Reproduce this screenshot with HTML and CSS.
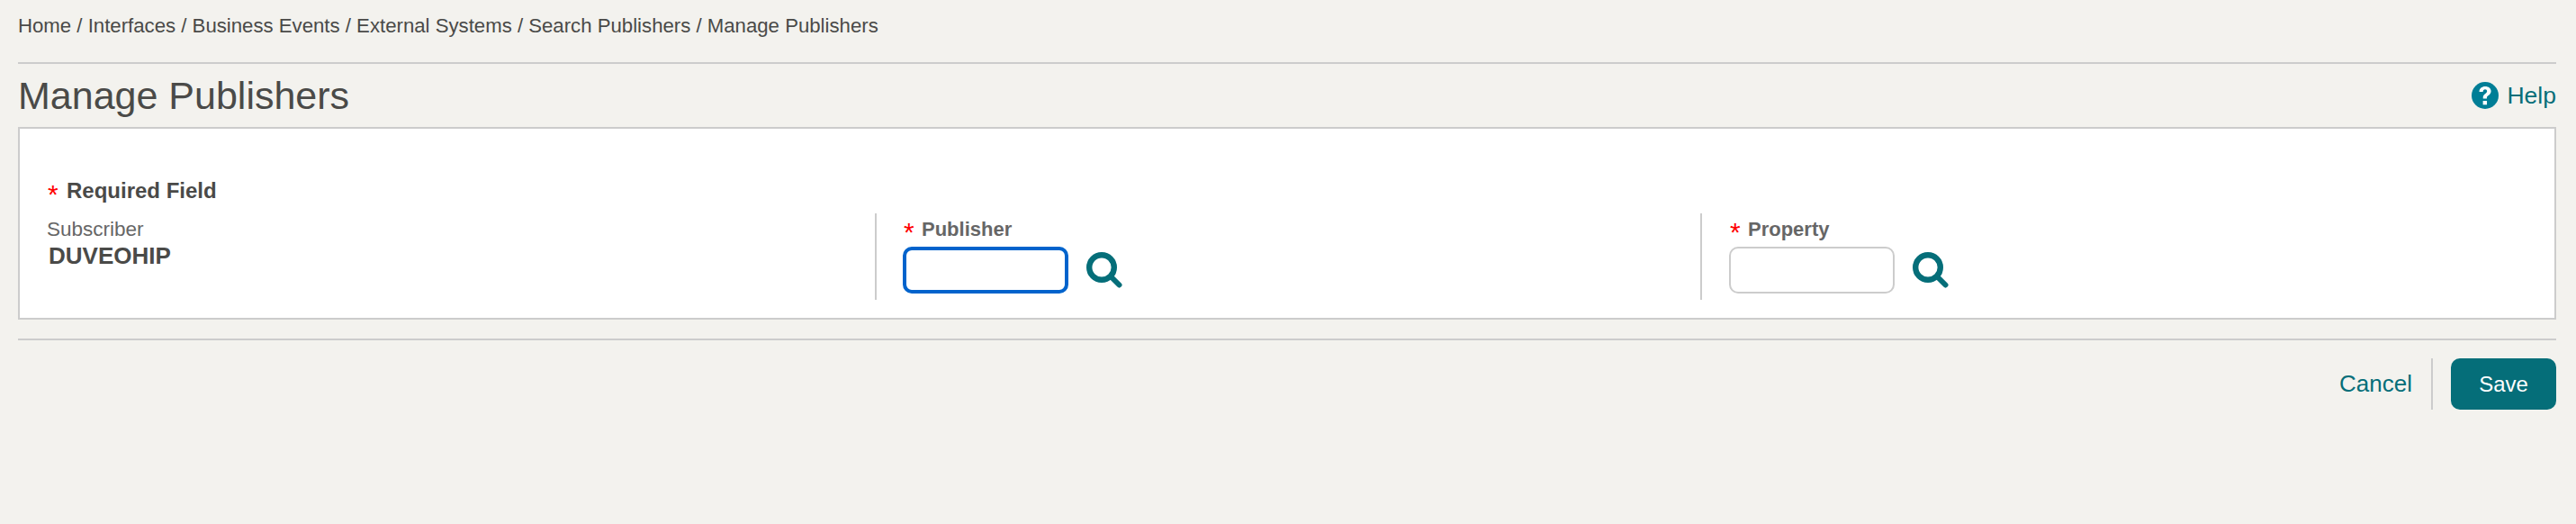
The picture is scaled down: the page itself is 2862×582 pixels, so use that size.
FILE: index.html
```html
<!DOCTYPE html>
<html lang="en">
  <head>
    <meta charset="UTF-8" />
    <title>Manage Publishers</title>
    <link rel="stylesheet" href="styles.css">
  </head>
  <body>
    <nav class="breadcrumb">Home / Interfaces / Business Events / External Systems / Search Publishers / Manage Publishers</nav>

    <header class="page-header">
      <h1>Manage Publishers</h1>
      <a class="help" href="#">
        <svg width="30" height="30" viewBox="0 0 30 30">
          <circle cx="15" cy="15" r="15" fill="#007e96" />
          <g transform="translate(15 15) scale(1.2) translate(-15 -15)">
            <path d="M9.6 11.6c0-3.2 2.4-5 5.500-5 3.200 0 5.400 1.800 5.400 4.500 0 2-1.100 3-2.500 4-1.100.8-1.400 1.200-1.400 2.400v.5h-3.500v-.9c0-1.900.7-2.800 2.100-3.800 1-.7 1.600-1.200 1.600-2.300 0-1-.7-1.700-1.800-1.700-1.200 0-1.900.8-2 2.300z" fill="#fff" />
            <rect x="13" y="20" width="3.700" height="3.600" fill="#fff" />
          </g>
        </svg>
        <span>Help</span>
      </a>
    </header>

    <main class="card">
      <div class="required"><span class="star">*</span>Required Field</div>
      <div class="fields">
        <div class="field first">
          <div class="plain-label">Subscriber</div>
          <div class="value">DUVEOHIP</div>
        </div>
        <div class="field">
          <label class="field-label"><span class="star">*</span>Publisher</label>
          <div class="input-row">
            <input type="text" class="text-input focused" />
            <svg class="search" width="40" height="40" viewBox="0 0 40 40">
              <circle cx="17" cy="17" r="13.800" fill="none" stroke="#056e79" stroke-width="6.400" />
              <line x1="27" y1="27" x2="36.500" y2="36.500" stroke="#056e79" stroke-width="6" stroke-linecap="round" />
            </svg>
          </div>
        </div>
        <div class="field last">
          <label class="field-label"><span class="star">*</span>Property</label>
          <div class="input-row">
            <input type="text" class="text-input" />
            <svg class="search" width="40" height="40" viewBox="0 0 40 40">
              <circle cx="17" cy="17" r="13.800" fill="none" stroke="#056e79" stroke-width="6.400" />
              <line x1="27" y1="27" x2="36.500" y2="36.500" stroke="#056e79" stroke-width="6" stroke-linecap="round" />
            </svg>
          </div>
        </div>
      </div>
    </main>

    <footer class="actions">
      <a class="cancel" href="#">Cancel</a>
      <span class="sep"></span>
      <button class="save">Save</button>
    </footer>
  </body>
</html>
```

FILE: styles.css
```css
body {
  font-family: "Liberation Sans", Arial, sans-serif;
  margin: 0;
  padding: 0 22px 0 20px;
  background-color: #f3f2ee;
  color: #4a4a48;
}
.breadcrumb {
  font-size: 22.2px;
  line-height: 26px;
  padding: 16px 0 27px 0;
  border-bottom: 2px solid #cccccc;
}
.page-header {
  display: flex;
  justify-content: space-between;
  align-items: center;
  height: 70px;
}
.page-header h1 {
  margin: 0;
  font-size: 43px;
  font-weight: normal;
}
.help {
  display: flex;
  align-items: center;
  gap: 9px;
  color: #056e79;
  font-size: 26.500px;
  text-decoration: none;
}
.card {
  box-sizing: border-box;
  background-color: white;
  border: 2px solid #cccccc;
  height: 214px;
  padding: 55px 0 0 30px;
}
.required {
  font-size: 24px;
  font-weight: bold;
  line-height: 28px;
  padding-left: 1px;
}
.star {
  display: inline-block;
  width: 20px;
  color: #ff0000;
  font-size: 30px;
  font-weight: normal;
  line-height: 0;
  vertical-align: -6px;
}
.required .star {
  width: 21px;
}
.fields {
  display: grid;
  grid-template-columns: 920px 917px 1fr;
  margin-top: 11px;
}
.field {
  box-sizing: border-box;
  border-left: 2px solid #cccccc;
  height: 96px;
  padding: 5px 0 0 29px;
}
.field.first {
  border-left: none;
  padding-left: 0;
}
.field.last {
  padding-left: 30px;
}
.plain-label {
  font-size: 22.500px;
  line-height: 26px;
  color: #666666;
}
.value {
  font-size: 26px;
  font-weight: bold;
  line-height: 32px;
  padding-left: 2px;
}
.field-label {
  display: block;
  font-size: 22px;
  font-weight: bold;
  line-height: 26px;
  color: #666666;
  padding-left: 1px;
}
.input-row {
  display: flex;
  align-items: center;
  gap: 20px;
  margin-top: 6px;
}
.text-input {
  box-sizing: border-box;
  width: 184px;
  height: 52px;
  border: 2px solid #cccccc;
  border-radius: 10px;
  background-color: white;
  outline: none;
}
.text-input.focused {
  border: 4px solid #0063cc;
}
.actions {
  display: flex;
  justify-content: flex-end;
  align-items: center;
  border-top: 2px solid #cccccc;
  margin-top: 21px;
  padding-top: 20px;
}
.cancel {
  color: #056e79;
  font-size: 26px;
  text-decoration: none;
}
.sep {
  width: 2px;
  height: 57px;
  background-color: #cccccc;
  margin: 0 20px 0 21px;
}
.save {
  width: 117px;
  height: 57px;
  background-color: #056e79;
  color: white;
  border: none;
  border-radius: 10px;
  font-family: inherit;
  font-size: 24px;
}
```
